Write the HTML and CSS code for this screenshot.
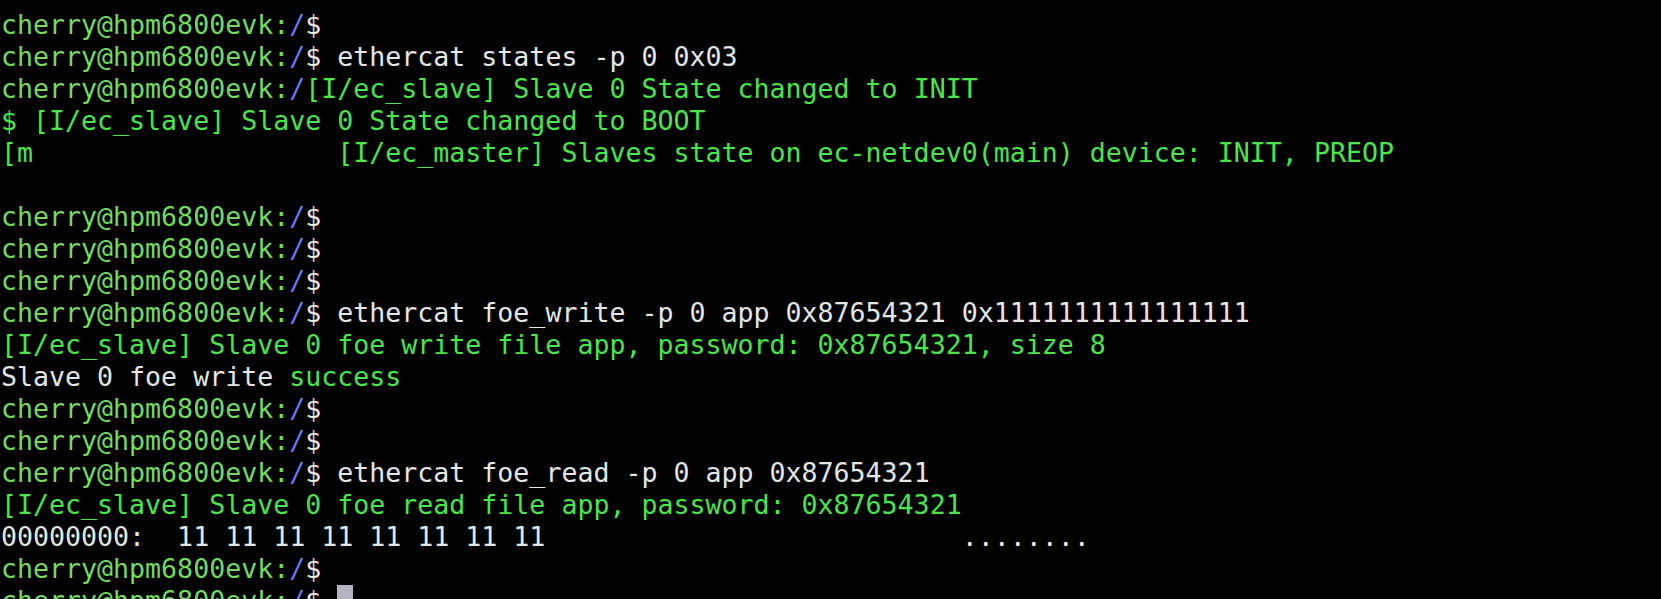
FILE: index.html
```html
<!DOCTYPE html>
<html>
<head>
<meta charset="utf-8">
<link rel="stylesheet" href="styles.css">
</head>
<body>
<pre class="term"><span class="p">cherry@hpm6800evk:</span><span class="b">/</span><span class="w">$</span>
<span class="p">cherry@hpm6800evk:</span><span class="b">/</span><span class="w">$ ethercat states -p 0 0x03</span>
<span class="p">cherry@hpm6800evk:</span><span class="b">/</span><span class="g">[I/ec_slave] Slave 0 State changed to INIT</span>
<span class="g">$ [I/ec_slave] Slave 0 State changed to BOOT</span>
<span class="g">[m                   [I/ec_master] Slaves state on ec-netdev0(main) device: INIT, PREOP</span>

<span class="p">cherry@hpm6800evk:</span><span class="b">/</span><span class="w">$</span>
<span class="p">cherry@hpm6800evk:</span><span class="b">/</span><span class="w">$</span>
<span class="p">cherry@hpm6800evk:</span><span class="b">/</span><span class="w">$</span>
<span class="p">cherry@hpm6800evk:</span><span class="b">/</span><span class="w">$ ethercat foe_write -p 0 app 0x87654321 0x1111111111111111</span>
<span class="g">[I/ec_slave] Slave 0 foe write file app, password: 0x87654321, size 8</span>
<span class="w">Slave 0 foe write </span><span class="g">success</span>
<span class="p">cherry@hpm6800evk:</span><span class="b">/</span><span class="w">$</span>
<span class="p">cherry@hpm6800evk:</span><span class="b">/</span><span class="w">$</span>
<span class="p">cherry@hpm6800evk:</span><span class="b">/</span><span class="w">$ ethercat foe_read -p 0 app 0x87654321</span>
<span class="g">[I/ec_slave] Slave 0 foe read file app, password: 0x87654321</span>
<span class="w">00000000:  11 11 11 11 11 11 11 11                          ........</span>
<span class="p">cherry@hpm6800evk:</span><span class="b">/</span><span class="w">$</span>
<span class="p">cherry@hpm6800evk:</span><span class="b">/</span><span class="w">$ </span><span class="cursor"> </span></pre>
</body>
</html>
```
FILE: styles.css
```css
html, body {
  margin: 0;
  padding: 0;
  background: #000;
  overflow: hidden;
}
body {
  width: 1661px;
  height: 599px;
}
.term {
  margin: 0;
  padding: 9px 0 0 1px;
  font-family: "DejaVu Sans Mono", monospace;
  font-size: 26.6px;
  line-height: 32px;
  color: #e6e6e6;
  white-space: pre;
}
.p { color: #74dc5c; }
.b { color: #6b78ee; }
.w { color: #e6e6e6; }
.g { color: #4ae64a; }
.cursor {
  display: inline-block;
  width: 16px;
  height: 32px;
  vertical-align: top;
  background: #b4b4c0;
}
```
